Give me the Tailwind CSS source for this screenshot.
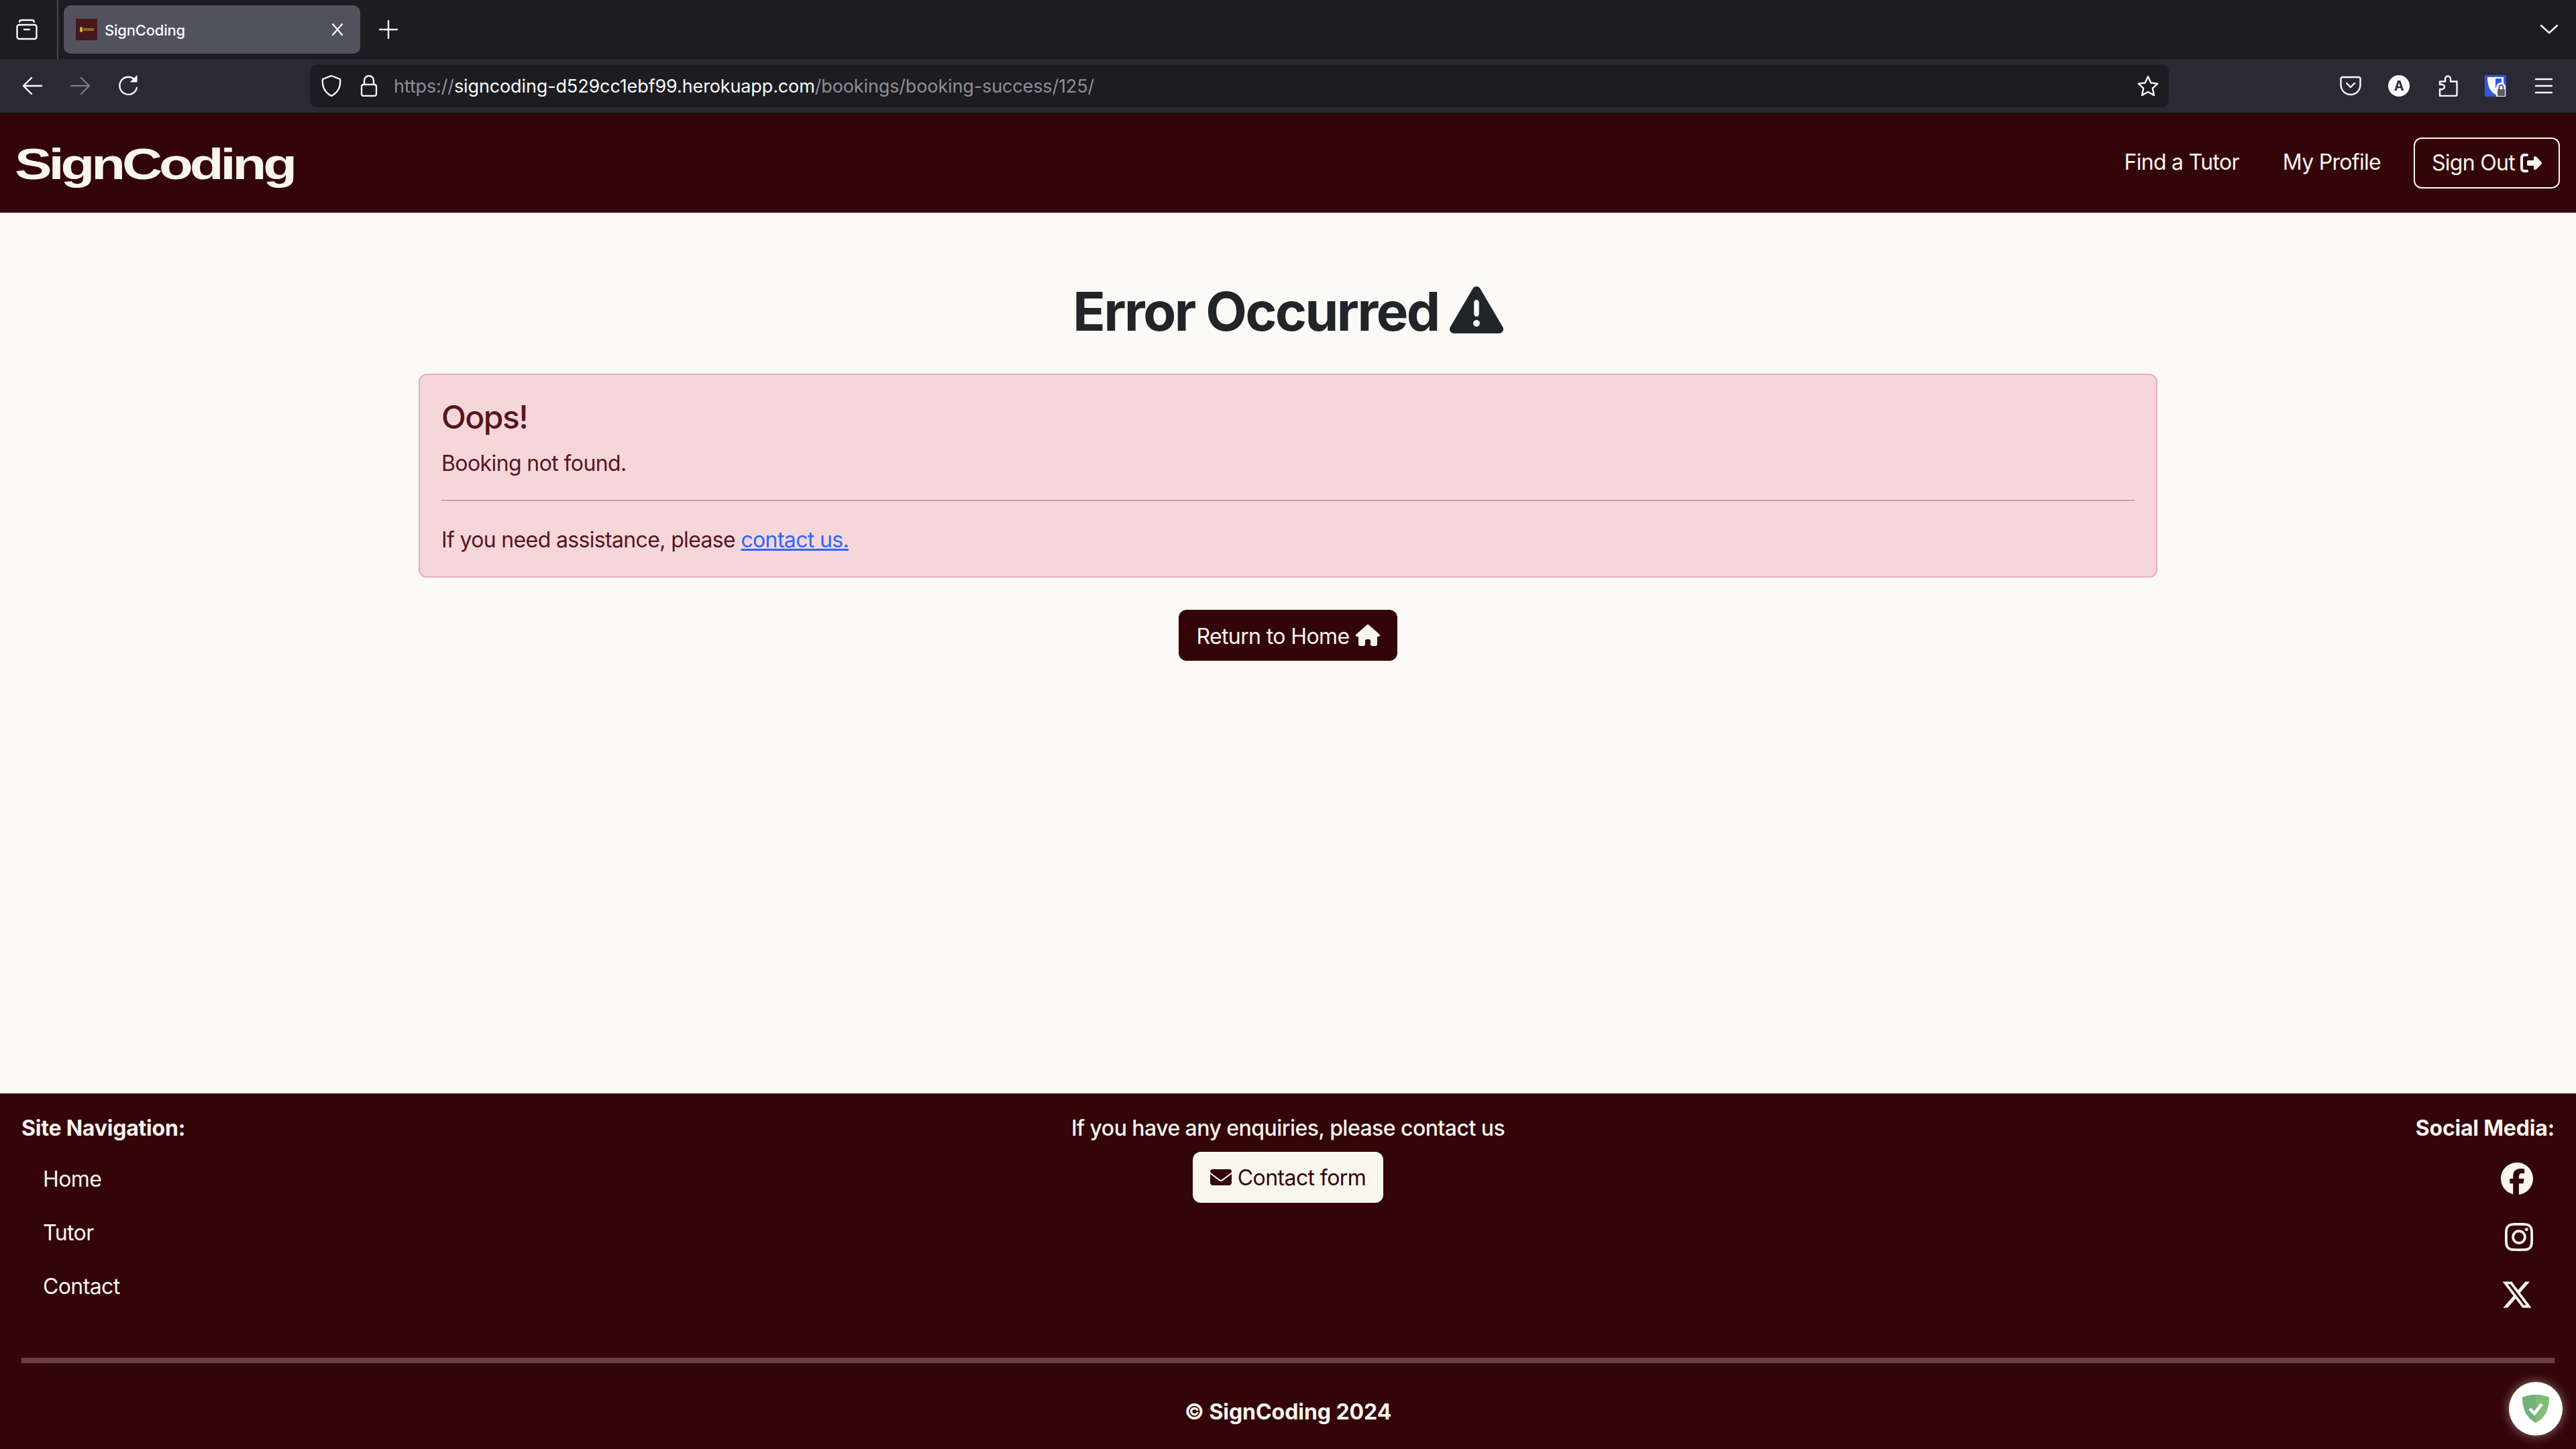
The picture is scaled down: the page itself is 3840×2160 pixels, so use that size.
<!DOCTYPE html>
<html lang="en"><head><meta charset="utf-8"><title>SignCoding</title>
<script src="https://cdn.jsdelivr.net/npm/@tailwindcss/browser@4"></script></head>
<body class="m-0 w-[3840px] h-[2160px] overflow-hidden relative bg-[#fbfaf6] font-[Inter,sans-serif] text-[32px] leading-[48px] tracking-[-0.6px] flex flex-col">

<!-- Tab strip -->
<div class="h-[88px] bg-[#1c1c21] flex items-stretch shrink-0">
  <div class="w-[85px] flex items-center pl-6 shrink-0">
    <svg class="w-8 h-8" viewBox="0 0 32 32" fill="none" stroke="#fbfbfe" stroke-width="2.400" stroke-linecap="round" stroke-linejoin="round"><path d="M5 4.500c.5-2 1.500-2.500 3-2.500h16c1.500 0 2.500.5 3 2.500"/><rect x="1.500" y="9" width="29" height="21" rx="3"/><path d="M12 16h8"/></svg>
  </div>
  <div class="w-0.5 bg-[#47474f] shrink-0"></div>
  <div class="ml-2 mt-2 h-[72px] w-[442px] rounded-[10px] bg-[#52525e] flex items-center pl-[18px] pr-[22px] shrink-0">
    <div class="w-8 h-8 bg-[#47181c] flex items-center justify-center gap-[1px] shrink-0"><div class="w-1 h-2 bg-[#e0b020] rounded-full"></div><div class="w-4 h-1 bg-[#b08c28]/70"></div></div>
    <span class="ml-[11px] text-[#fbfbfe] text-[22px] leading-8 font-medium tracking-[-0.2px] pt-0.5">SignCoding</span>
    <svg class="ml-auto w-6 h-6" viewBox="0 0 24 24" fill="none" stroke="#fbfbfe" stroke-width="2.200" stroke-linecap="round"><path d="M5 4l14 16M19 4L5 20"/></svg>
  </div>
  <div class="ml-[28px] flex items-center">
    <svg class="w-7 h-7" viewBox="0 0 28 28" fill="none" stroke="#fbfbfe" stroke-width="2.400" stroke-linecap="round"><path d="M14 1v26M1 14h26"/></svg>
  </div>
  <div class="ml-auto mr-6 flex items-center pb-[2px]">
    <svg class="w-8 h-8" viewBox="0 0 32 32" fill="none" stroke="#fbfbfe" stroke-width="2.400" stroke-linecap="round" stroke-linejoin="round"><path d="M4 11l12 11 12-11"/></svg>
  </div>
</div>

<!-- Toolbar -->
<div class="h-[81px] bg-[#2b2a33] border-b border-[#0c0c0d] flex items-center pl-8 shrink-0">
  <svg class="w-8 h-8 shrink-0" viewBox="0 0 32 32" fill="none" stroke="#fbfbfe" stroke-width="2.400" stroke-linecap="round" stroke-linejoin="round"><path d="M30 16H3M15 4L3 16l12 12"/></svg>
  <svg class="ml-10 w-8 h-8 shrink-0" viewBox="0 0 32 32" fill="none" stroke="#7a7a80" stroke-width="2.400" stroke-linecap="round" stroke-linejoin="round"><path d="M2 16h27M17 4l12 12-12 12"/></svg>
  <svg class="ml-10 w-8 h-8 shrink-0" viewBox="0 0 32 32" fill="none" stroke="#fbfbfe" stroke-width="2.400" stroke-linecap="round" stroke-linejoin="round"><path d="M28 19a13 13 0 1 1-3-12"/><path d="M28 1v9h-9z" fill="#fbfbfe" stroke-width="1"/></svg>
  <div class="ml-[254px] w-[2771px] h-16 rounded-[10px] bg-[#1c1c21] flex items-center pl-4 shrink-0">
    <svg class="w-8 h-8 shrink-0" viewBox="0 0 32 32" fill="none" stroke="#fbfbfe" stroke-width="2.400" stroke-linejoin="round"><path d="M16 1l13 5c1 10-2 19-13 25C5 25 2 16 3 6z"/></svg>
    <svg class="ml-6 w-8 h-8 shrink-0" viewBox="0 0 32 32" fill="none" stroke="#fbfbfe" stroke-width="2.400" stroke-linejoin="round"><rect x="5" y="14" width="22" height="17" rx="3"/><path d="M9 14V8a7 7 0 0 1 14 0v6"/></svg>
    <span class="ml-[21px] text-[27px] leading-8 tracking-[-0.13px] pt-0.5 text-[#8f8f95] whitespace-nowrap">https://<span class="text-[#fbfbfe]">signcoding-d529cc1ebf99.herokuapp.com</span>/bookings/booking-success/125/</span>
    <svg class="ml-auto mr-[15px] w-8 h-8 shrink-0" viewBox="0 0 32 32" fill="none" stroke="#fbfbfe" stroke-width="2.400" stroke-linejoin="round"><path d="M16 2l4.300 9.500 10 1.200-7.400 7 2 10.300L16 25l-8.900 5 2-10.300-7.400-7 10-1.200z"/></svg>
  </div>
  <svg class="ml-[255px] w-8 h-8 shrink-0" viewBox="0 0 32 32" fill="none" stroke="#fbfbfe" stroke-width="2.400" stroke-linecap="round" stroke-linejoin="round"><path d="M4 3h24c1.500 0 2.500 1 2.500 2.500V14c0 9-6.500 15-14.500 15S1.500 23 1.500 14V5.500C1.500 4 2.500 3 4 3z"/><path d="M10 12l6 6 6-6"/></svg>
  <div class="ml-10 w-8 h-8 rounded-full bg-[#fbfbfe] text-[#2b2a33] text-[20px] leading-8 font-bold text-center shrink-0">A</div>
  <svg class="ml-[42px] w-8 h-8 shrink-0" viewBox="0 0 32 32" fill="none" stroke="#fbfbfe" stroke-width="2.400" stroke-linejoin="round"><path d="M3 31V21c4 1 7-1 7-3.500S7 13 3 14V9.500h8V6c0-6 8-6 8 0v3.500h9.500V29a2 2 0 0 1-2 2z"/></svg>
  <svg class="ml-[38px] w-8 h-8 shrink-0" viewBox="0 0 32 32"><rect width="32" height="32" rx="2" fill="#3158e0"/><path d="M4 3h24v26H16C9 25 4 18 4 3z" fill="#fbfbfe"/><rect x="16" y="5" width="9" height="14" fill="#3158e0"/><path d="M17 32V18a6 6 0 0 1 14 0v14z" fill="#fbfbfe"/><rect x="19" y="21" width="11" height="10" rx="1" fill="#5d5d62"/><path d="M21.500 21v-3a3 3 0 0 1 6 0v3" fill="none" stroke="#5d5d62" stroke-width="2"/></svg>
  <svg class="ml-10 w-8 h-8 shrink-0" viewBox="0 0 32 32" fill="none" stroke="#fbfbfe" stroke-width="2.400" stroke-linecap="round"><path d="M4 6h24M4 16h24M4 26h24"/></svg>
</div>

<!-- Navbar -->
<nav class="h-[148px] bg-[#340508] text-[#f9f6ee] flex items-center pl-[22px] pr-6 shrink-0">
  <span class="font-['Liberation_Sans'] font-bold text-[64px] leading-[80px] tracking-[-3.900px] scale-x-[1.3] origin-left text-[#f9f6ee] pt-[3px]">SignCoding</span>
  <div class="ml-auto flex items-center tracking-[-0.7px]">
    <a class="mb-0.5">Find a Tutor</a>
    <a class="ml-[65px] mb-0.5">My Profile</a>
    <a class="ml-[49px] h-[76px] w-[218px] rounded-xl border-2 border-[#f9f6ee] flex items-center justify-center gap-[8px]">Sign Out
      <svg class="w-8 h-8" viewBox="0 0 512 512" fill="currentColor"><path d="M377.900 105.900L500.700 228.700c7.200 7.200 11.300 17.100 11.300 27.300s-4.100 20.100-11.300 27.300L377.900 406.100c-6.400 6.400-15 9.900-24.100 9.900c-18.700 0-33.900-15.200-33.900-33.900l0-62.100-128 0c-17.700 0-32-14.300-32-32l0-64c0-17.700 14.300-32 32-32l128 0 0-62.100c0-18.700 15.200-33.900 33.900-33.900c9 0 17.700 3.600 24.100 9.900zM160 96L96 96c-17.700 0-32 14.300-32 32l0 256c0 17.700 14.300 32 32 32l64 0c17.700 0 32 14.300 32 32s-14.300 32-32 32l-64 0c-53 0-96-43-96-96L0 128C0 75 43 32 96 32l64 0c17.700 0 32 14.300 32 32s-14.300 32-32 32z"/></svg>
    </a>
  </div>
</nav>

<!-- Main -->
<main class="flex-1 flex flex-col items-center pt-[99px] text-[#212529]">
  <h1 class="text-[80px] leading-[96px] font-bold tracking-[-2.500px] flex items-center gap-[16px]">Error Occurred
    <svg class="w-20 h-20 mb-[5px]" viewBox="0 0 512 512" fill="currentColor"><path d="M256 32c14.200 0 27.300 7.500 34.500 19.800l216 368c7.300 12.400 7.300 27.700 .2 40.100S486.300 480 472 480H40c-14.300 0-27.600-7.700-34.700-20.100s-7-27.800 .2-40.100l216-368C228.700 39.500 241.800 32 256 32zm0 128c-13.300 0-24 10.700-24 24V296c0 13.300 10.700 24 24 24s24-10.700 24-24V184c0-13.300-10.700-24-24-24zm32 224a32 32 0 1 0 -64 0 32 32 0 1 0 64 0z"/></svg>
  </h1>
  <div class="mt-[45px] w-[2592px] rounded-xl border-2 border-[#ebadb4] bg-[#f5d7da] text-[#58151c] pt-[34px] pb-[30px] px-8">
    <h4 class="text-[48px] leading-[58px] font-medium tracking-[-1.500px]">Oops!</h4>
    <p class="mt-4">Booking not found.</p>
    <hr class="mt-[30px] mb-[34px] border-0 h-0.5 bg-[#c9a1a5]">
    <p class="tracking-[-0.65px]">If you need assistance, please <a class="text-[#2f66ff] underline">contact us.</a></p>
  </div>
  <a class="mt-[48px] h-[76px] w-[326px] rounded-xl bg-[#340508] text-[#f9f6ee] flex items-center justify-center gap-[9px] pt-1">Return to Home
    <svg class="w-9 h-8 mb-1" viewBox="0 0 576 512" fill="currentColor"><path d="M575.800 255.500c0 18-15 32.100-32 32.100h-32l.7 160.200c0 2.700-.2 5.400-.5 8.100V472c0 22.100-17.900 40-40 40H456c-1.100 0-2.200 0-3.300-.1c-1.400 .1-2.800 .1-4.200 .1H416 392c-22.100 0-40-17.900-40-40V448 384c0-17.700-14.300-32-32-32H256c-17.700 0-32 14.300-32 32v64 24c0 22.100-17.900 40-40 40H160 128.100c-1.500 0-3-.1-4.500-.2c-1.200 .1-2.400 .2-3.600 .2H104c-22.100 0-40-17.900-40-40V360c0-.9 0-1.900 .1-2.800V287.600H32c-18 0-32-14-32-32.100c0-9 3-17 10-24L266.400 8c7-7 15-8 22-8s15 2 21 7L564.800 231.500c8 7 12 15 11 24z"/></svg>
  </a>
</main>

<!-- Footer -->
<footer class="h-[530px] bg-[#340508] text-[#f9f6ee] pt-7 shrink-0">
  <div class="h-[366px] px-8 flex justify-between">
    <div class="w-[700px]">
      <div class="font-bold tracking-[-0.2px]">Site Navigation:</div>
      <ul class="mt-[11px] pl-8">
        <li class="pt-[17px] pb-[15px]">Home</li>
        <li class="pt-[17px] pb-[15px]">Tutor</li>
        <li class="pt-[17px] pb-[15px]">Contact</li>
      </ul>
    </div>
    <div class="flex flex-col items-center">
      <div class="font-medium tracking-[-0.55px]">If you have any enquiries, please contact us</div>
      <a class="mt-[11px] h-[76px] w-[284px] rounded-xl bg-[#f9f6ee] text-[#340508] flex items-center justify-center gap-[9px] pt-0.5">
        <svg class="w-8 h-8 mb-0.5" viewBox="0 0 512 512" fill="currentColor"><path d="M48 64C21.500 64 0 85.500 0 112c0 15.100 7.100 29.300 19.200 38.400L236.800 313.600c11.400 8.500 27 8.500 38.400 0L492.800 150.400c12.100-9.100 19.200-23.300 19.200-38.400c0-26.500-21.500-48-48-48H48zM0 176V384c0 35.300 28.700 64 64 64H448c35.300 0 64-28.700 64-64V176L294.400 339.200c-22.800 17.100-54 17.100-76.800 0L0 176z"/></svg>Contact form</a>
    </div>
    <div class="w-[700px] flex flex-col items-end">
      <div class="font-bold tracking-[-0.2px]">Social Media:</div>
      <div class="mt-[27px] pr-8 flex flex-col items-end gap-[38.500px]">
        <svg class="w-12 h-12" viewBox="0 0 512 512" fill="currentColor"><path d="M512 256C512 114.600 397.400 0 256 0S0 114.600 0 256C0 376 82.700 476.800 194.200 504.500V334.200H141.400V256h52.800V222.300c0-87.100 39.400-127.500 125-127.500c16.200 0 44.200 3.200 55.700 6.400V172c-6-.6-16.500-1-29.600-1c-42 0-58.200 15.900-58.200 57.200V256h83.600l-14.400 78.200H287V510.100C413.800 494.800 512 386.900 512 256h0z"/></svg>
        <svg class="w-[42px] h-12" viewBox="0 0 448 512" fill="currentColor"><path d="M224.100 141c-63.600 0-114.900 51.300-114.900 114.900s51.300 114.900 114.900 114.900S339 319.500 339 255.900 287.700 141 224.100 141zm0 189.600c-41.100 0-74.700-33.500-74.700-74.700s33.500-74.700 74.700-74.700 74.700 33.500 74.700 74.700-33.600 74.700-74.700 74.700zm146.400-194.300c0 14.900-12 26.800-26.800 26.800-14.900 0-26.800-12-26.800-26.800s12-26.800 26.800-26.800 26.800 12 26.800 26.800zm76.100 27.200c-1.700-35.900-9.900-67.700-36.200-93.900-26.200-26.200-58-34.400-93.900-36.200-37-2.100-147.900-2.100-184.900 0-35.800 1.700-67.600 9.900-93.900 36.100s-34.400 58-36.200 93.900c-2.100 37-2.100 147.900 0 184.900 1.700 35.900 9.900 67.700 36.200 93.900s58 34.400 93.900 36.200c37 2.100 147.900 2.100 184.900 0 35.900-1.700 67.700-9.900 93.900-36.200 26.200-26.200 34.400-58 36.200-93.900 2.100-37 2.100-147.800 0-184.800zM398.800 388c-7.800 19.600-22.900 34.700-42.600 42.600-29.500 11.700-99.500 9-132.100 9s-102.700 2.600-132.100-9c-19.600-7.800-34.700-22.900-42.600-42.600-11.700-29.500-9-99.500-9-132.100s-2.600-102.700 9-132.100c7.800-19.600 22.900-34.700 42.600-42.600 29.500-11.700 99.500-9 132.100-9s102.700-2.600 132.100 9c19.600 7.800 34.700 22.900 42.600 42.600 11.700 29.500 9 99.500 9 132.100s2.700 102.700-9 132.100z"/></svg>
        <svg class="w-12 h-12" viewBox="0 0 512 512" fill="currentColor"><path d="M389.200 48h70.600L305.600 224.200 487 464H345L233.700 318.600 106.500 464H35.800L200.700 275.500 26.800 48H172.400L272.900 180.900 389.200 48zM364.400 421.800h39.100L151.100 88h-42L364.400 421.800z"/></svg>
      </div>
    </div>
  </div>
  <div class="mx-8 h-2 bg-[#683f45]"></div>
  <div class="mt-[49px] text-center font-bold tracking-[-0.05px]">© SignCoding 2024</div>
</footer>

<!-- Floating badge -->
<div class="absolute left-[3740px] top-[2060px] w-20 h-20 rounded-full bg-white shadow-[0_0_16px_rgba(255,255,255,0.45)] flex items-center justify-center">
  <svg class="w-[42px] h-[42px]" viewBox="0 0 42 42"><path d="M21 0C13 0 6 2 1 4c0 16 5 30 20 38z" fill="#74b07a"/><path d="M21 0c8 0 15 2 20 4 0 16-5 30-20 38z" fill="#7ebd76"/><path d="M12 21l7 7 11-14" fill="none" stroke="#fff" stroke-width="4.500"/></svg>
</div>
</body></html>
